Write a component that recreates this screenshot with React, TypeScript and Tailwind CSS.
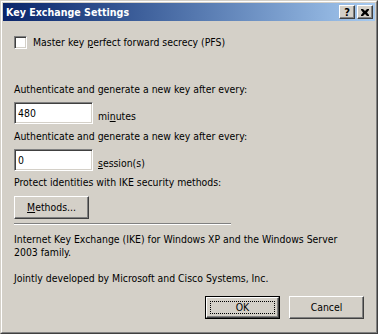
import React from "react";

const font = { fontFamily: "'DejaVu Sans Condensed', 'DejaVu Sans', sans-serif" };

function Raised({ children, className = "" }: { children?: React.ReactNode; className?: string }) {
  return (
    <div
      className={`border border-t-white border-l-white border-r-[#404040] border-b-[#404040] shadow-[inset_-1px_-1px_#808080] bg-[#d4d0c8] ${className}`}
    >
      {children}
    </div>
  );
}

function Sunken({ children, className = "" }: { children?: React.ReactNode; className?: string }) {
  return (
    <div
      className={`border border-t-[#808080] border-l-[#808080] border-r-white border-b-white shadow-[inset_1px_1px_#404040,inset_-1px_-1px_#d4d0c8] bg-white ${className}`}
    >
      {children}
    </div>
  );
}

export default function App() {
  return (
    <div className="w-[378px] h-[334px] text-[10.4px] leading-[13px] font-stretch-condensed text-black whitespace-nowrap" style={font}>
      <div className="w-full h-full border border-t-[#d4d0c8] border-l-[#d4d0c8] border-r-[#404040] border-b-[#404040] bg-[#d4d0c8]">
        <div className="w-full h-full border border-t-white border-l-white border-r-[#808080] border-b-[#808080] p-px flex flex-col">
          {/* title bar */}
          <div className="h-[18px] shrink-0 flex items-center pl-[3px] pr-[2px] bg-gradient-to-r from-[#0a246a] to-[#a6caf0]">
            <span className="text-white font-bold text-[10.6px] flex-1">Key Exchange Settings</span>
            <Raised className="w-4 h-[14px] flex items-center justify-center">
              <span className="font-bold text-[11px] leading-none">?</span>
            </Raised>
            <Raised className="w-4 h-[14px] ml-[2px] flex items-center justify-center">
              <svg width="8" height="7" viewBox="0 0 8 7">
                <path d="M0 0h2l2 2 2-2h2v1L6 3.5 8 6v1H6L4 5 2 7H0V6l2-2.5L0 1z" fill="#000" />
              </svg>
            </Raised>
          </div>
          {/* body */}
          <div className="flex-1 flex flex-col px-[11px]">
            <div className="flex items-center mt-[15px] h-[13px]">
              <Sunken className="w-[13px] h-[13px]" />
              <span className="ml-[6px]">
                Master key <u>p</u>erfect forward secrecy (PFS)
              </span>
            </div>
            <div className="mt-[34px]">Authenticate and generate a new key after every:</div>
            <div className="flex items-end mt-[6px]">
              <Sunken className="w-[79px] h-[22px] px-[3px] flex items-center">480</Sunken>
              <span className="ml-[5px] mb-[1px]">
                mi<u>n</u>utes
              </span>
            </div>
            <div className="mt-[6px]">Authenticate and generate a new key after every:</div>
            <div className="flex items-end mt-[6px]">
              <Sunken className="w-[79px] h-[22px] px-[3px] flex items-center">0</Sunken>
              <span className="ml-[5px] mb-[1px]">
                <u>s</u>ession(s)
              </span>
            </div>
            <div className="mt-[5px]">Protect identities with IKE security methods:</div>
            <Raised className="mt-[7px] w-[75px] h-[23px] flex items-center justify-center">
              <span>
                <u>M</u>ethods...
              </span>
            </Raised>
            <div className="mt-[4px] w-[217px] h-[2px] border-t border-t-[#808080] border-b border-b-white" />
            <div className="mt-[8px]">
              Internet Key Exchange (IKE) for Windows XP and the Windows Server
              <br />
              2003 family.
            </div>
            <div className="mt-[13px]">Jointly developed by Microsoft and Cisco Systems, Inc.</div>
            <div className="flex justify-end gap-[9px] mt-[11px]">
              <div className="border border-black">
                <Raised className="w-[73px] h-[21px] p-[3px]">
                  <div className="w-full h-full border border-dotted border-black flex items-center justify-center">
                    OK
                  </div>
                </Raised>
              </div>
              <Raised className="w-[75px] h-[23px] flex items-center justify-center">Cancel</Raised>
            </div>
          </div>
        </div>
      </div>
    </div>
  );
}
